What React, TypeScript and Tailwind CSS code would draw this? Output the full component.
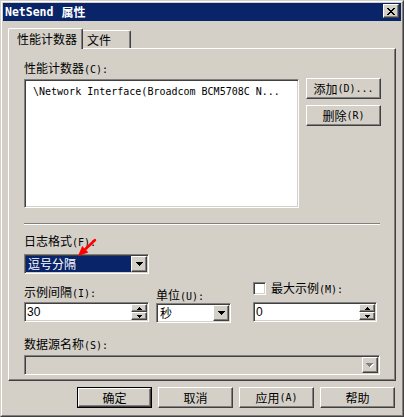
import React from "react";

const face = "bg-[#d4d0c8]";
const raised =
  "border border-t-white border-l-white border-r-[#404040] border-b-[#404040] shadow-[inset_-1px_-1px_0_#808080]";
const sunken =
  "border border-t-[#808080] border-l-[#808080] border-r-white border-b-white shadow-[inset_1px_1px_0_#404040,inset_-1px_-1px_0_#d4d0c8]";

const cjk = /([\u3000-\u9fff\uff00-\uffef]+)/;

// CJK in Noto, the latin bits in a 6px-wide mono like SimSun does
function T({ text }: { text: string }) {
  const parts = text.split(cjk).filter(Boolean);
  return (
    <>
      {parts.map((p, i) =>
        cjk.test(p) ? (
          <span key={i}>{p}</span>
        ) : (
          <span key={i} className="font-['DejaVu_Sans_Mono'] text-[10px]">
            {p}
          </span>
        )
      )}
    </>
  );
}

function Pixels({ rows, w, h, color }: { rows: number[][]; w: number; h: number; color: string }) {
  return (
    <svg width={w} height={h} viewBox={`0 0 ${w} ${h}`} shapeRendering="crispEdges">
      {rows.map(([x, y, rw], i) => (
        <rect key={i} x={x} y={y} width={rw} height={1} fill={color} />
      ))}
    </svg>
  );
}

const down7 = [
  [0, 0, 7],
  [1, 1, 5],
  [2, 2, 3],
  [3, 3, 1],
];
const up5 = [
  [2, 0, 1],
  [1, 1, 3],
  [0, 2, 5],
];
const down5 = [
  [0, 0, 5],
  [1, 1, 3],
  [2, 2, 1],
];

function DropArrow({ disabled }: { disabled?: boolean }) {
  if (!disabled) return <Pixels rows={down7} w={7} h={4} color="#000" />;
  return (
    <div className="relative w-[8px] h-[5px]">
      <div className="absolute left-px top-px">
        <Pixels rows={down7} w={7} h={4} color="#fff" />
      </div>
      <div className="absolute left-0 top-0">
        <Pixels rows={down7} w={7} h={4} color="#808080" />
      </div>
    </div>
  );
}

function Button({ label, isDefault }: { label: string; isDefault?: boolean }) {
  const inner = (
    <div className={`w-full h-full ${face} ${raised} flex items-center justify-center`}>
      <T text={label} />
    </div>
  );
  if (isDefault) return <div className="w-[75px] h-[21px] border border-black">{inner}</div>;
  return <div className="w-[75px] h-[21px]">{inner}</div>;
}

function Combo({
  w,
  children,
  disabled,
}: {
  w: string;
  children?: React.ReactNode;
  disabled?: boolean;
}) {
  return (
    <div className={`${w} h-[20px] ${disabled ? face : "bg-white"} ${sunken} flex p-px`}>
      <div className="flex-1 flex items-center">{children}</div>
      <div className={`w-[16px] ${face} ${raised} flex items-center justify-center`}>
        <DropArrow disabled={disabled} />
      </div>
    </div>
  );
}

function Spin({ w, value }: { w: string; value: string }) {
  return (
    <div className={`${w} h-[20px] bg-white ${sunken} flex p-px`}>
      <div className="flex-1 flex items-center pl-px font-['Liberation_Sans'] text-[12px]">{value}</div>
      <div className="w-[16px] flex flex-col">
        <div className={`h-[8px] ${face} ${raised} flex items-center justify-center`}>
          <Pixels rows={up5} w={5} h={3} color="#000" />
        </div>
        <div className={`h-[8px] ${face} ${raised} flex items-center justify-center`}>
          <Pixels rows={down5} w={5} h={3} color="#000" />
        </div>
      </div>
    </div>
  );
}

const closeX = [
  [0, 0, 2], [6, 0, 2],
  [1, 1, 2], [5, 1, 2],
  [2, 2, 4],
  [3, 3, 2],
  [2, 4, 4],
  [1, 5, 2], [5, 5, 2],
  [0, 6, 2], [6, 6, 2],
];

export default function App() {
  return (
    <div className="relative w-[404px] h-[417px] bg-[#d4d0c8] border border-t-[#d4d0c8] border-l-[#d4d0c8] border-r-[#404040] border-b-[#404040] font-['Noto_Sans_CJK_SC',sans-serif] text-[12px] leading-[12px] text-black">
      <div className="h-full border border-t-white border-l-white border-r-[#808080] border-b-[#808080] p-px flex flex-col">
        {/* title bar */}
        <div className="h-[18px] bg-[#0a246a] flex px-[2px]">
          <div className="flex items-center text-white font-bold">
            <span className="font-['DejaVu_Sans_Mono'] text-[11.5px]">NetSend</span>
            <span className="ml-[8px]">属性</span>
          </div>
          <div className={`ml-auto mt-px w-[16px] h-[14px] ${face} ${raised} flex items-center justify-center`}>
            <Pixels rows={closeX} w={8} h={7} color="#000" />
          </div>
        </div>

        <div className="flex flex-col pl-[5px] pt-[7px]">
          {/* tabs */}
          <div className="flex items-end h-[20px]">
            <div className={`relative z-10 w-[75px] h-[21px] -mb-px ${face} border-t border-l border-r border-t-white border-l-white border-r-[#404040] shadow-[inset_-1px_0_0_#808080] rounded-t-[2px] pl-[8px] pt-[4px]`}>
              <T text="性能计数器" />
            </div>
            <div className={`w-[48px] h-[18px] ${face} border-t border-r border-t-white border-r-[#404040] shadow-[inset_-1px_0_0_#808080] rounded-tr-[2px] pl-[4px] pt-[3px]`}>
              <T text="文件" />
            </div>
          </div>

          {/* tab panel */}
          <div className={`w-[388px] h-[333px] ${face} border border-t-white border-l-white border-r-[#404040] border-b-[#404040] shadow-[inset_-1px_-1px_0_#808080] pl-[15px] flex flex-col`}>
            <div className="mt-[13px]">
              <T text="性能计数器(C):" />
            </div>

            <div className="mt-[2px] flex items-start">
              <div className={`mt-px w-[275px] h-[129px] bg-white ${sunken} pl-[8px] pt-[4px]`}>
                <span className="font-['DejaVu_Sans_Mono'] text-[10px] whitespace-pre">
                  \Network Interface(Broadcom BCM5708C N...
                </span>
              </div>
              <div className="ml-[7px] flex flex-col gap-[6px]">
                <Button label="添加(D)..." />
                <Button label="删除(R)" />
              </div>
            </div>

            <div className="mt-[15px] w-[356px] border-t border-b border-t-[#808080] border-b-white" />

            <div className="mt-[10px]">
              <T text="日志格式(F):" />
            </div>
            <div className="mt-[5px]">
              <Combo w="w-[125px]">
                <div className="h-full w-full bg-[#0a246a] text-white flex items-center pl-[2px]">
                  逗号分隔
                </div>
              </Combo>
            </div>

            <div className="mt-[8px] h-[40px] flex">
              <div className="w-[125px] flex flex-col">
                <div className="mt-[4px]">
                  <T text="示例间隔(I):" />
                </div>
                <div className="mt-auto">
                  <Spin w="w-[125px]" value="30" />
                </div>
              </div>
              <div className="ml-[7px] w-[75px] flex flex-col">
                <div className="mt-[7px]">
                  <T text="单位(U):" />
                </div>
                <div className="mt-auto">
                  <Combo w="w-[75px]">
                    <span className="pl-[2px]">秒</span>
                  </Combo>
                </div>
              </div>
              <div className="ml-[22px] w-[124px] flex flex-col">
                <div className="flex items-center h-[13px]">
                  <div className={`w-[13px] h-[13px] bg-white ${sunken}`} />
                  <div className="ml-[5px]">
                    <T text="最大示例(M):" />
                  </div>
                </div>
                <div className="mt-auto">
                  <Spin w="w-[124px]" value="0" />
                </div>
              </div>
            </div>

            <div className="mt-[16px]">
              <T text="数据源名称(S):" />
            </div>
            <div className="mt-[3px]">
              <Combo w="w-[356px]" disabled />
            </div>
          </div>

          {/* dialog buttons */}
          <div className="mt-[6px] flex justify-end gap-[6px] pr-[6px]">
            <Button label="确定" isDefault />
            <Button label="取消" />
            <Button label="应用(A)" />
            <Button label="帮助" />
          </div>
        </div>
      </div>

      {/* red annotation arrow */}
      <svg className="absolute left-[70px] top-[234px]" width="30" height="26" viewBox="0 0 30 26">
        <line x1="24" y1="5" x2="13" y2="15.5" stroke="#ff0000" strokeWidth="2.5" strokeLinecap="round" />
        <polygon points="7,21 17.4,17.5 11.2,10.9" fill="#ff0000" />
      </svg>
    </div>
  );
}
